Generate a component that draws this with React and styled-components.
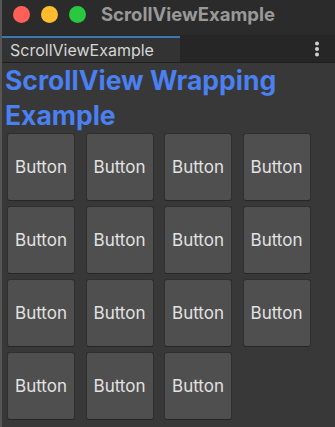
import React from 'react';
import styled, { createGlobalStyle } from 'styled-components';

const GlobalStyle = createGlobalStyle`
  html, body {
    margin: 0;
    padding: 0;
    background: #383838;
    overflow: hidden;
  }
`;

const Window = styled.div`
  width: 335px;
  height: 427px;
  display: flex;
  flex-direction: column;
  background: #383838;
  border-left: 2px solid #565656;
  box-sizing: border-box;
  font-family: Inter, "Noto Sans", sans-serif;
  overflow: hidden;
`;

const TitleBar = styled.div`
  height: 35px;
  flex: none;
  display: flex;
  align-items: flex-start;
  padding: 6px 0 0 11px;
  box-sizing: border-box;
  background: #2b2b2b;
`;

const Light = styled.span`
  width: 17px;
  height: 17px;
  border-radius: 50%;
  background: ${p => p.color};
  margin-right: 11px;
  flex: none;
`;

const WindowTitle = styled.div`
  margin-left: 4px;
  font-size: 18.5px;
  font-weight: 700;
  line-height: 17px;
  color: #999999;
`;

const TabBar = styled.div`
  height: 27px;
  flex: none;
  display: flex;
  align-items: stretch;
  justify-content: space-between;
  background: #262626;
  border-bottom: 1px solid #1e1e1e;
`;

const Tab = styled.div`
  width: 178px;
  padding-left: 8px;
  box-sizing: border-box;
  display: flex;
  align-items: center;
  background: #333333;
  border-top: 2px solid #3b77b7;
  margin-top: 1px;
  font-size: 16px;
  color: #d6d6d6;
`;

const Kebab = styled.div`
  width: 30px;
  display: flex;
  align-items: center;
  justify-content: center;
  padding-right: 3px;
`;

const Heading = styled.h1`
  margin: 0;
  padding: 0 0 0 3px;
  font-size: 26.5px;
  line-height: 35px;
  font-weight: 700;
  color: #4a80f0;
`;

const Grid = styled.div`
  display: grid;
  grid-template-columns: repeat(4, 68px);
  column-gap: 10.5px;
  row-gap: 5px;
  padding-left: 5px;
`;

const Button = styled.button`
  width: 68px;
  height: 68px;
  padding: 0;
  background: #4f4f4f;
  border: 1px solid #2f2f2f;
  border-bottom-color: #262626;
  border-radius: 3px;
  font-family: Inter, "Noto Sans", sans-serif;
  font-size: 17px;
  color: #e2e2e2;
`;

export default function App() {
  const buttons = Array.from({ length: 15 }, (_, i) => i);
  return (
    <>
      <GlobalStyle />
      <Window>
        <TitleBar>
          <Light color="#fe5f57" />
          <Light color="#febc2e" />
          <Light color="#28c840" />
          <WindowTitle>ScrollViewExample</WindowTitle>
        </TitleBar>
        <TabBar>
          <Tab>ScrollViewExample</Tab>
          <Kebab>
            <svg width="6" height="16" viewBox="0 0 6 16">
              <circle cx="3" cy="2.5" r="2" fill="#d0d0d0" />
              <circle cx="3" cy="8" r="2" fill="#d0d0d0" />
              <circle cx="3" cy="13.5" r="2" fill="#d0d0d0" />
            </svg>
          </Kebab>
        </TabBar>
        <Heading>ScrollView Wrapping Example</Heading>
        <Grid>
          {buttons.map(i => (
            <Button key={i}>Button</Button>
          ))}
        </Grid>
      </Window>
    </>
  );
}
